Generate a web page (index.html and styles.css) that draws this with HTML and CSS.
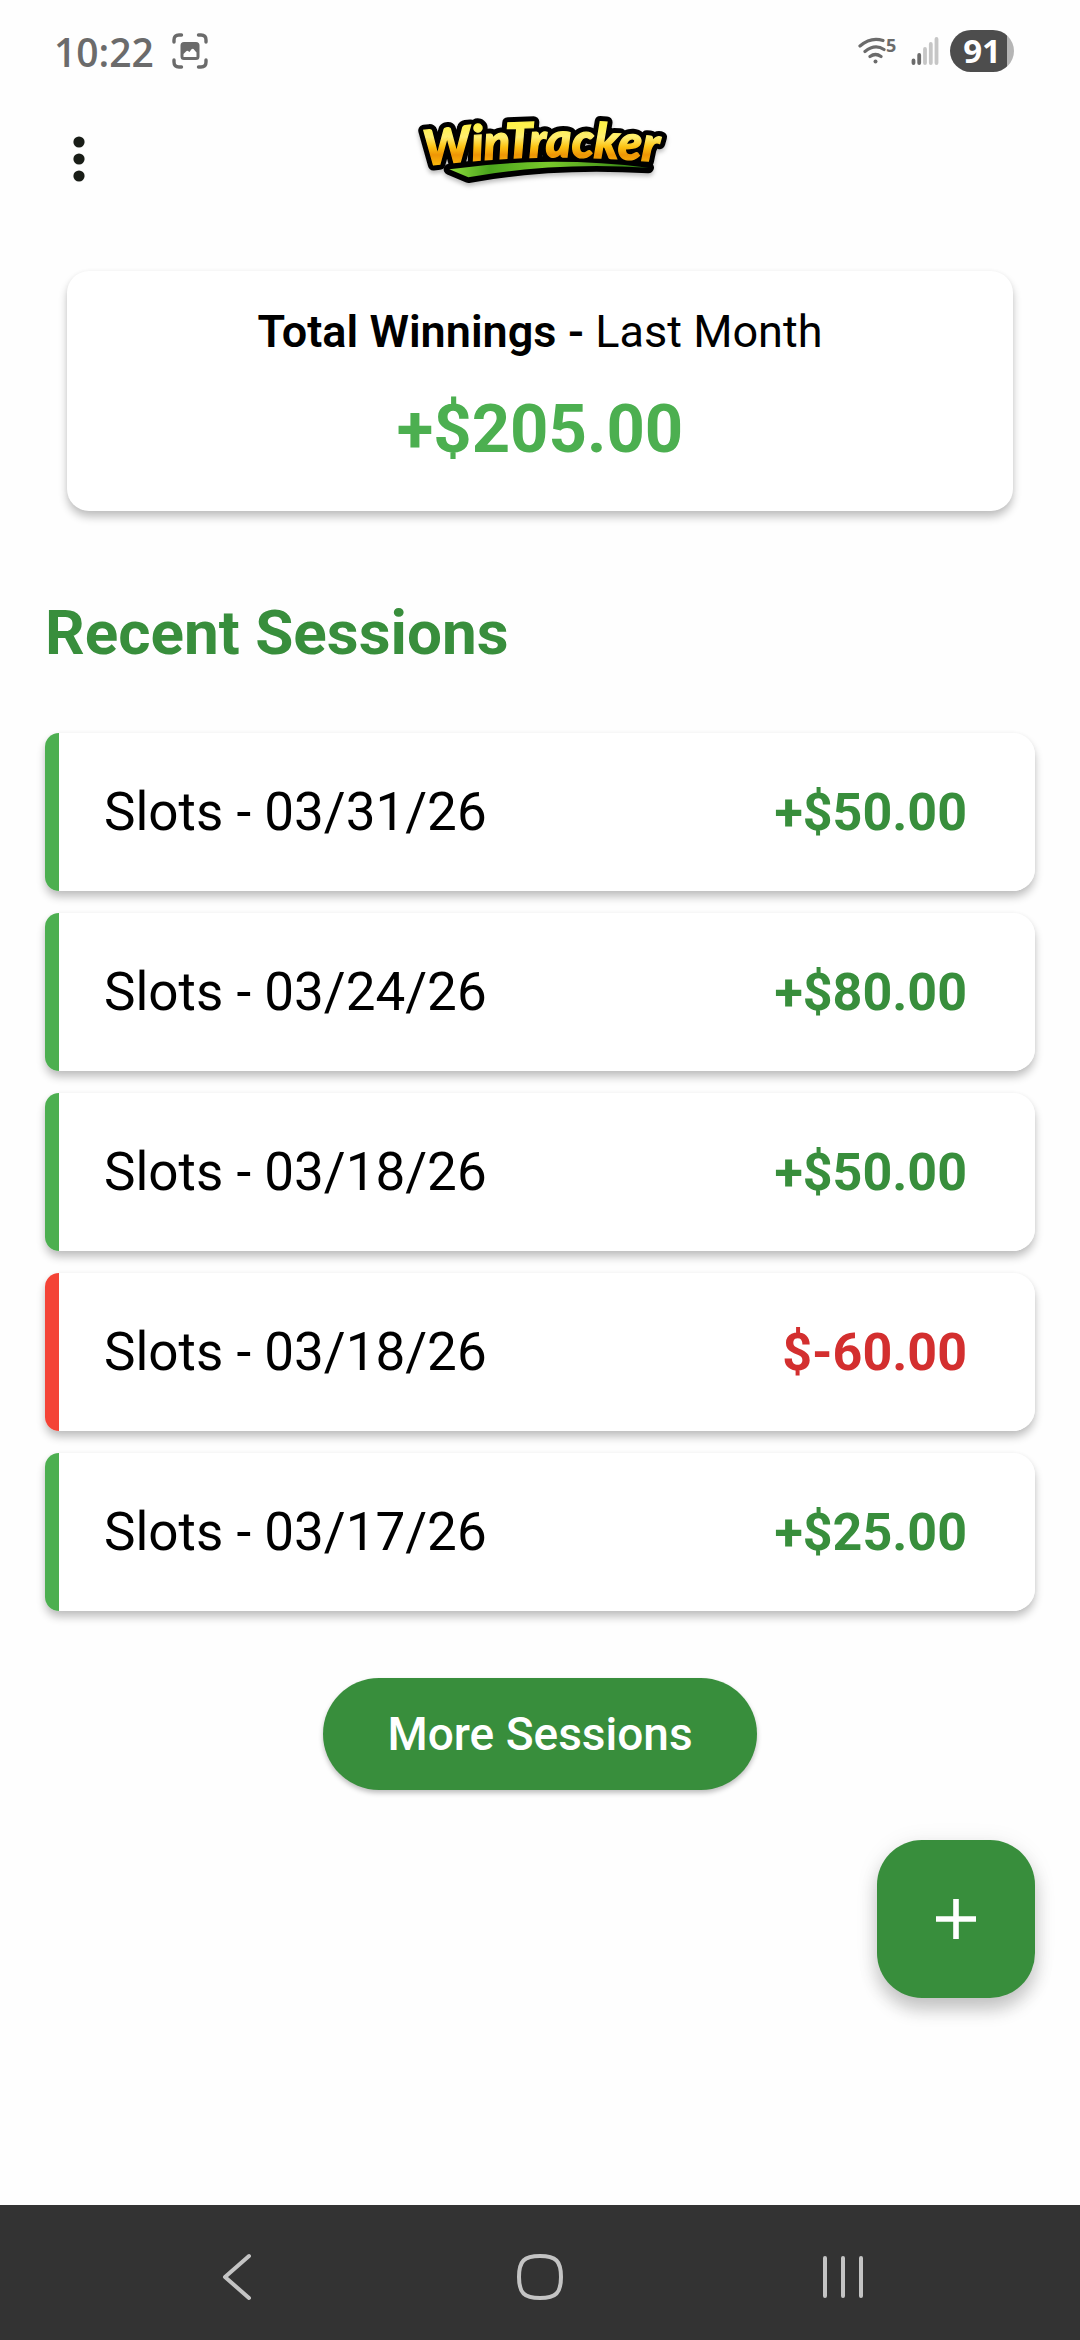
FILE: index.html
```html
<!DOCTYPE html>
<html lang="en">
<head>
    <meta charset="UTF-8">
    <meta name="viewport" content="width=device-width, initial-scale=1.0">
    <title>WinTracker</title>
    <link rel="stylesheet" href="styles.css">
</head>
<body>
    <div class="status-bar">
        <div class="status-left">
            <span class="time">10:22</span>
            <svg width="36" height="36" viewBox="0 0 36 36" fill="none" stroke="#6b6b6b" stroke-width="3.4" stroke-linecap="round">
                <path d="M2 9V7q0-5 5-5h2.500M26.500 2H29q5 0 5 5v2M34 27v2q0 5-5 5h-2.500M9.500 34H7q-5 0-5-5v-2"/>
                <path fill="#6b6b6b" stroke="none" fill-rule="evenodd" d="M12 9h12q3.500 0 3.500 3.500v11q0 3.500-3.500 3.500H12q-3.500 0-3.500-3.500v-11Q8.500 9 12 9zM11.500 24h13v-4.500l-3-3.500q-1-.8-2 .3l-2 2.700-1.500-1q-1-.6-2 .4l-2.500 2.600z"/>
            </svg>
        </div>
        <div class="status-right">
            <svg width="42" height="42" viewBox="0 -6 42 42" fill="none" stroke="#6b6b6b" stroke-width="3.200" stroke-linecap="round">
                <path d="M2 10Q13 .5 25 4.500M7 15.500q10-8 19-2M12 20.500q5.500-4 11 0"/>
                <circle cx="17.500" cy="25.500" r="2" fill="#6b6b6b" stroke="none"/>
                <text class="wifi-five" x="28" y="16">5</text>
            </svg>
            <svg width="28" height="30" viewBox="0 0 28 30" fill="none" stroke-width="3.800" stroke-linecap="round">
                <path stroke="#6b6b6b" d="M2.500 24.500v2.500M8.200 19v8"/>
                <path stroke="#c6c6c6" d="M14 13v14M19.800 8v19M25.500 3v24"/>
            </svg>
            <span class="battery">91</span>
        </div>
    </div>

    <header class="app-bar">
        <button class="menu-btn" aria-label="Menu">
            <svg width="12" height="46" viewBox="0 0 12 46" fill="#191d17">
                <circle cx="6" cy="6" r="5.600"/>
                <circle cx="6" cy="23" r="5.600"/>
                <circle cx="6" cy="40" r="5.600"/>
            </svg>
        </button>
        <svg class="logo" width="290" height="100" viewBox="-15 27 870 300">
            <defs>
                <linearGradient id="gold" x1="0" y1="75" x2="0" y2="195" gradientUnits="userSpaceOnUse">
                    <stop offset="0" stop-color="#fff34a"/>
                    <stop offset=".3" stop-color="#ffef70"/>
                    <stop offset=".55" stop-color="#fcc213"/>
                    <stop offset=".75" stop-color="#ee9505"/>
                    <stop offset="1" stop-color="#fbb80c"/>
                </linearGradient>
                <linearGradient id="leaf" x1="150" y1="0" x2="740" y2="0" gradientUnits="userSpaceOnUse">
                    <stop offset="0" stop-color="#8edb3c"/>
                    <stop offset=".2" stop-color="#4aa51d"/>
                    <stop offset=".5" stop-color="#79c92b"/>
                    <stop offset="1" stop-color="#2c7c12"/>
                </linearGradient>
                <path id="arc" d="M76 198Q430 148 840 192"/>
            </defs>
            <path class="swoosh-edge" d="M148 208Q440 165 745 203Q460 185 205 232z"/>
            <text class="logo-text logo-edge"><textPath href="#arc">WinTracker</textPath></text>
            <path fill="url(#leaf)" d="M148 208Q440 165 745 203Q460 185 205 232z"/>
            <text class="logo-text logo-face" fill="url(#gold)"><textPath href="#arc">WinTracker</textPath></text>
        </svg>
    </header>

    <main class="content">
        <section class="summary">
            <p class="summary-title"><b>Total Winnings - </b>Last Month</p>
            <p class="summary-amount">+$205.00</p>
        </section>

        <h1 class="heading">Recent Sessions</h1>

        <ul class="sessions">
            <li class="session win">
                <span>Slots - 03/31/26</span>
                <span class="amount">+$50.00</span>
            </li>
            <li class="session win">
                <span>Slots - 03/24/26</span>
                <span class="amount">+$80.00</span>
            </li>
            <li class="session win">
                <span>Slots - 03/18/26</span>
                <span class="amount">+$50.00</span>
            </li>
            <li class="session loss">
                <span>Slots - 03/18/26</span>
                <span class="amount">$-60.00</span>
            </li>
            <li class="session win">
                <span>Slots - 03/17/26</span>
                <span class="amount">+$25.00</span>
            </li>
        </ul>

        <button class="more-btn">More Sessions</button>

        <button class="add-btn" aria-label="Add session">
            <svg width="40" height="40" viewBox="0 0 40 40" stroke="#fff" stroke-width="5.600">
                <path d="M20 0v40M0 20h40"/>
            </svg>
        </button>
    </main>

    <nav class="nav-bar">
        <button class="nav-btn" aria-label="Back">
            <svg width="48" height="48" viewBox="0 0 48 48">
                <path d="M36 3L12 24l24 21"/>
            </svg>
        </button>
        <button class="nav-btn" aria-label="Home">
            <svg width="48" height="48" viewBox="0 0 48 48">
                <path d="M24 3c16 0 21 5 21 21s-5 21-21 21S3 40 3 24 8 3 24 3z"/>
            </svg>
        </button>
        <button class="nav-btn" aria-label="Recent apps">
            <svg width="48" height="48" viewBox="0 0 48 48">
                <path d="M6 5v38M24 5v38M42 5v38"/>
            </svg>
        </button>
    </nav>
</body>
</html>
```
FILE: styles.css
```css
* {
    box-sizing: border-box;
    margin: 0;
    padding: 0;
}

body {
    display: flex;
    flex-direction: column;
    min-height: 100vh;
    background-color: #fefefe;
    color: #000;
    font-family: Roboto, sans-serif;
}

button {
    border: none;
    background: none;
    font-family: inherit;
    cursor: pointer;
}

svg {
    display: block;
}

/* Status bar */
.status-bar {
    display: flex;
    justify-content: space-between;
    align-items: center;
    height: 102px;
    padding: 0 66px 0 54px;
    color: #6b6b6b;
    font-family: "Open Sans", sans-serif;
}

.status-left {
    display: flex;
    align-items: center;
    gap: 18px;
}

.status-right {
    display: flex;
    align-items: center;
    gap: 11px;
}

.time {
    font-size: 39px;
    font-weight: 600;
}

.wifi-five {
    fill: #6b6b6b;
    stroke: none;
    font-size: 18px;
    font-weight: 700;
}

.battery {
    width: 64px;
    border-radius: 21px;
    background: linear-gradient(to right, #4d4d4d 57px, #b5b5b5 57px);
    color: #fff;
    font-size: 33px;
    font-weight: 700;
    line-height: 42px;
    text-align: center;
}

/* App bar */
.app-bar {
    display: grid;
    grid-template-columns: 1fr auto 1fr;
    align-items: center;
    height: 114px;
    padding: 0 45px;
}

.menu-btn {
    display: flex;
    justify-content: center;
    align-items: center;
    width: 68px;
    height: 68px;
}

.logo {
    filter: drop-shadow(0 3px 2px rgba(0, 0, 0, 0.25));
}

.logo-text {
    font-family: Lato, sans-serif;
    font-size: 146px;
    font-style: italic;
    font-weight: 900;
}

.logo-face {
    stroke: url(#gold);
    stroke-width: 4px;
}

.logo-edge,
.swoosh-edge {
    fill: #000;
    stroke: #000;
    stroke-width: 34px;
    stroke-linejoin: round;
}

/* Content */
.content {
    display: flex;
    flex-direction: column;
    flex: 1;
    padding: 55px 45px;
}

.summary {
    margin: 0 22px;
    padding: 34px 45px 42px;
    border-radius: 22px;
    background-color: #fff;
    box-shadow: 0 6px 9px rgba(0, 0, 0, 0.24), 0 0 4px rgba(0, 0, 0, 0.04);
    text-align: center;
}

.summary-title {
    font-size: 45px;
    line-height: 54px;
}

.summary-title b {
    font-weight: 600;
}

.summary-amount {
    margin-top: 30px;
    color: #4caf50;
    font-size: 67px;
    font-weight: 700;
    line-height: 80px;
}

.heading {
    margin: 86px 0 64px;
    color: #388e3c;
    font-size: 62px;
    font-weight: 700;
    line-height: 72px;
}

.sessions {
    display: flex;
    flex-direction: column;
    gap: 22px;
    list-style: none;
}

.session {
    display: flex;
    justify-content: space-between;
    align-items: center;
    height: 158px;
    padding: 0 68px 0 59px;
    border-radius: 14px 22px 22px 14px;
    background: linear-gradient(to right, #4caf50 14px, #fff 14px);
    box-shadow: 0 6px 9px rgba(0, 0, 0, 0.24), 0 0 4px rgba(0, 0, 0, 0.04);
    font-size: 53px;
}

.loss {
    background: linear-gradient(to right, #f44336 14px, #fff 14px);
}

.amount {
    color: #388e3c;
    font-size: 52px;
    font-weight: 700;
}

.loss .amount {
    color: #d32f2f;
}

.more-btn {
    align-self: center;
    margin-top: 67px;
    padding: 0 64px;
    border-radius: 56px;
    background-color: #388e3c;
    box-shadow: 0 3px 5px rgba(0, 0, 0, 0.25);
    color: #fff;
    font-size: 46px;
    font-weight: 500;
    line-height: 112px;
}

.add-btn {
    display: flex;
    justify-content: center;
    align-items: center;
    align-self: flex-end;
    width: 158px;
    height: 158px;
    margin-top: 50px;
    border-radius: 45px;
    background-color: #388e3c;
    box-shadow: 0 12px 18px rgba(0, 0, 0, 0.2), 0 3px 24px rgba(0, 0, 0, 0.08);
}

/* System navigation */
.nav-bar {
    display: grid;
    grid-template-columns: repeat(3, 1fr);
    padding: 8px 86px 0;
    background-color: #333;
}

.nav-btn {
    display: flex;
    justify-content: center;
    align-items: center;
    height: 127px;
}

.nav-btn path {
    fill: none;
    stroke: #c4c4c4;
    stroke-width: 4px;
    stroke-linecap: round;
    stroke-linejoin: round;
}
```
